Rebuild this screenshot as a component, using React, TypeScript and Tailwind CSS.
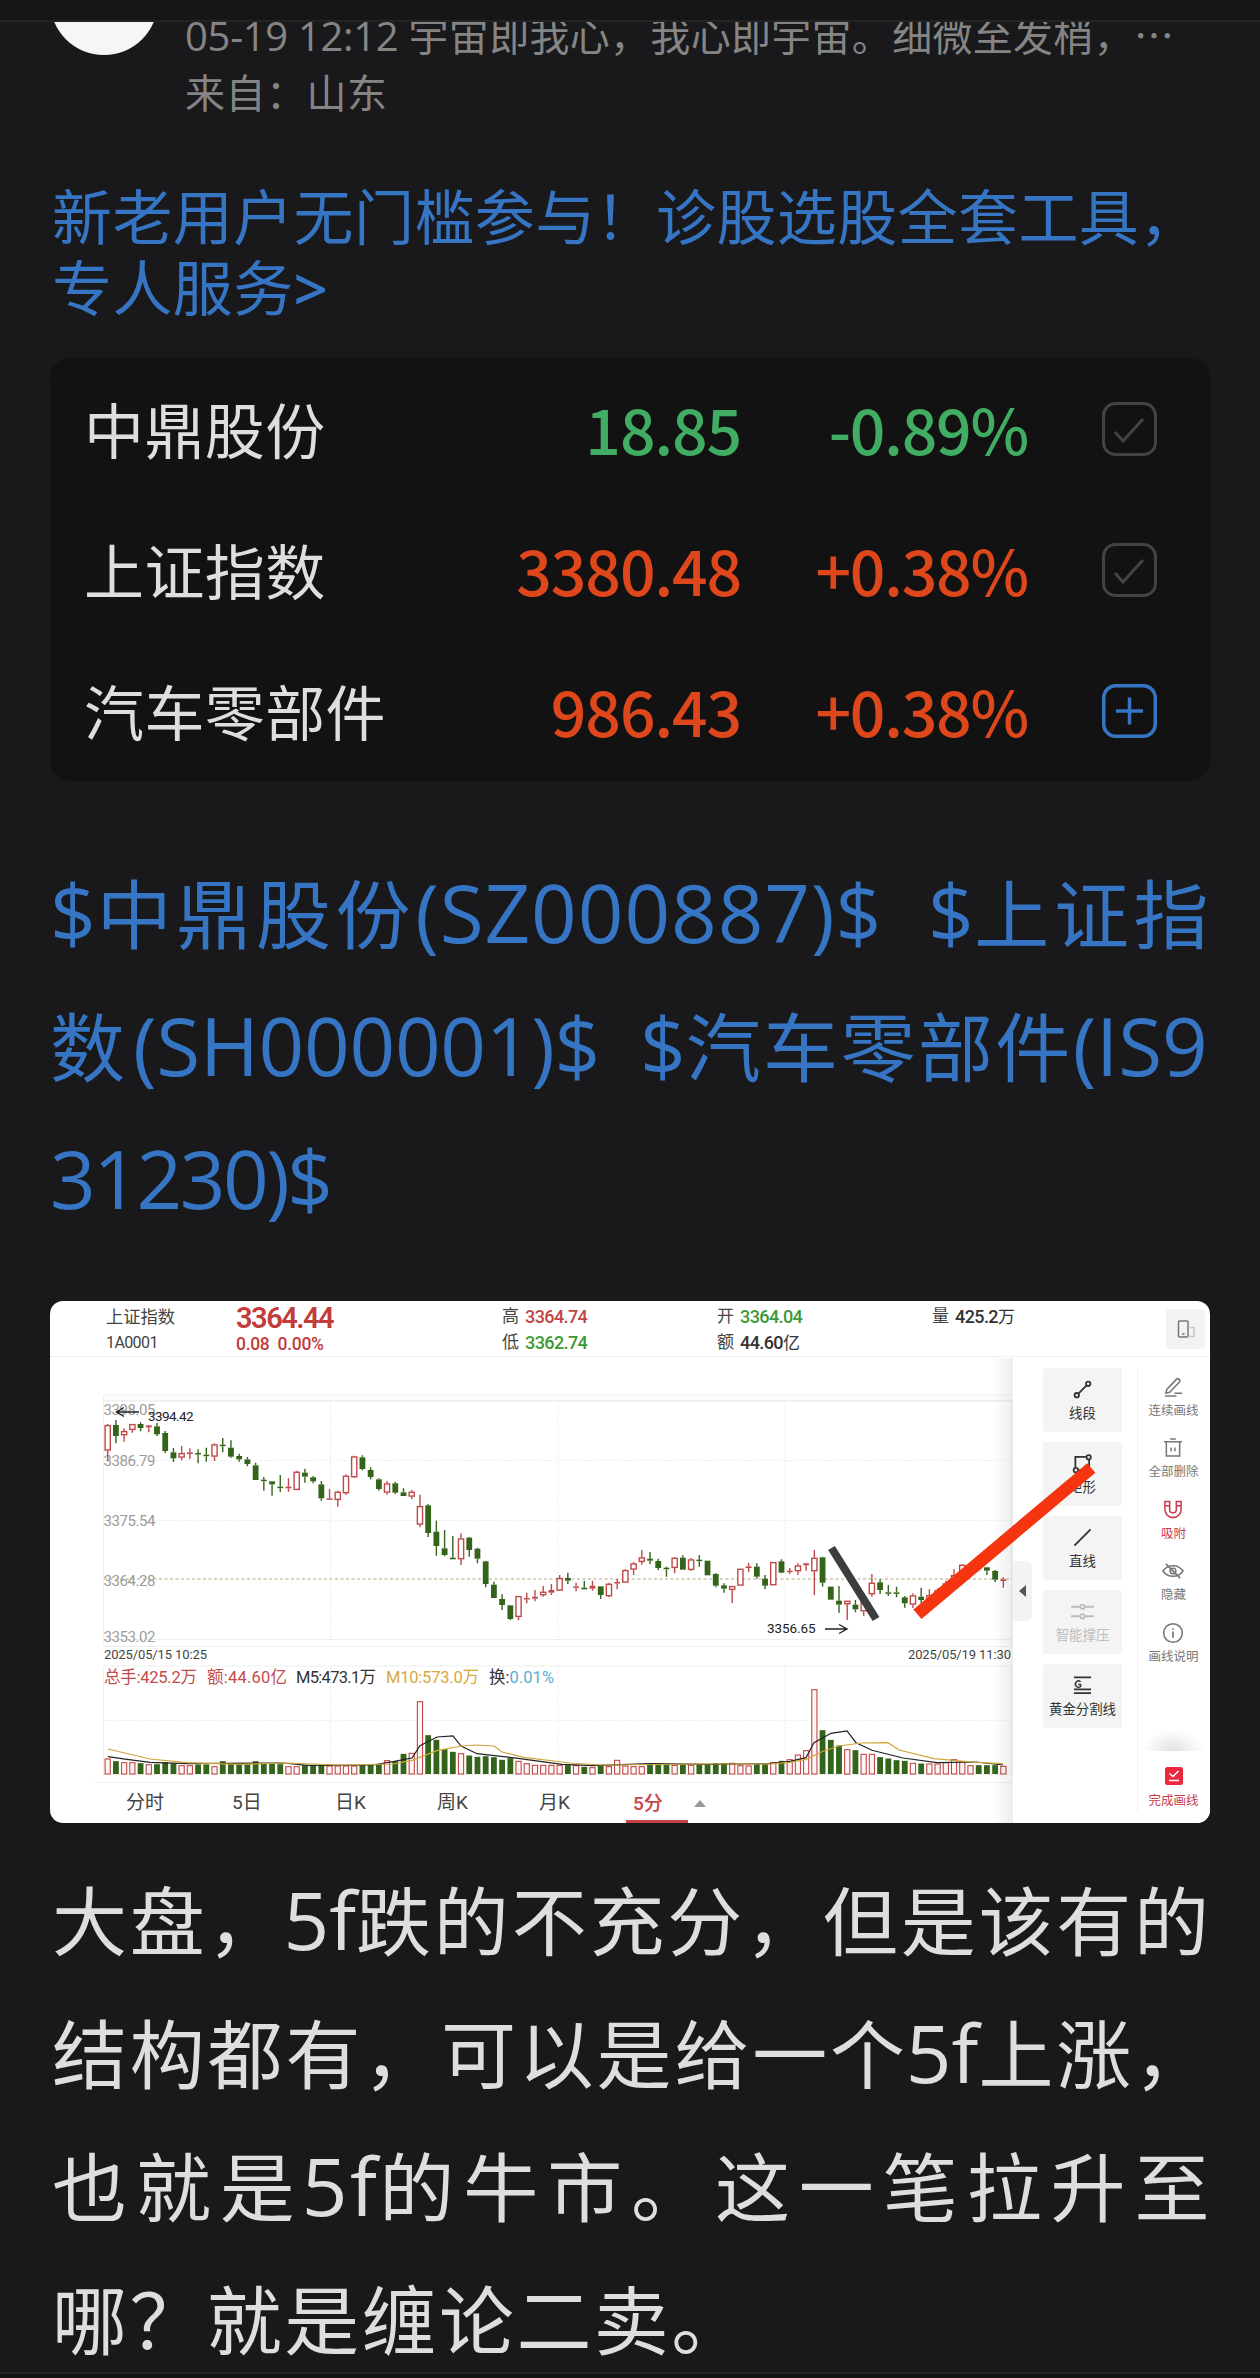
import React from 'react'

type Stock = { name: string, price: string, change: string, color: string, added: boolean }

const stocks: Stock[] = [
    { name: '中鼎股份', price: '18.85', change: '-0.89%', color: 'text-[#40ad62]', added: true },
    { name: '上证指数', price: '3380.48', change: '+0.38%', color: 'text-[#de461b]', added: true },
    { name: '汽车零部件', price: '986.43', change: '+0.38%', color: 'text-[#de461b]', added: false },
]

// [up, body top, body bottom, high, low, volume top], in thirds of a pixel
const candles: number[][] = [
    [1, 405, 482, 402, 513, 657], [0, 405, 438, 390, 460, 665], [1, 423, 436, 415, 455, 668], [1, 402, 420, 402, 428, 668],
    [0, 402, 414, 397, 424, 671], [1, 406, 412, 406, 427, 674], [0, 409, 433, 399, 438, 674], [0, 429, 483, 423, 489, 668],
    [0, 487, 505, 474, 516, 672], [1, 489, 503, 468, 511, 677], [1, 487, 492, 475, 507, 677], [0, 489, 492, 478, 520, 675],
    [0, 494, 496, 473, 515, 675], [1, 463, 500, 460, 513, 680], [0, 464, 467, 444, 487, 665], [0, 473, 500, 451, 504, 672],
    [0, 498, 508, 491, 515, 674], [0, 508, 522, 501, 529, 674], [0, 526, 570, 518, 570, 665], [0, 569, 572, 561, 602, 672],
    [0, 574, 583, 574, 617, 672], [0, 590, 594, 555, 606, 674], [1, 590, 595, 565, 605, 680], [1, 545, 600, 542, 600, 680],
    [0, 548, 560, 536, 578, 677], [0, 562, 574, 558, 580, 677], [0, 583, 625, 573, 632, 677], [1, 625, 628, 597, 630, 678],
    [1, 605, 630, 602, 650, 678], [1, 557, 610, 553, 615, 678], [1, 499, 562, 497, 563, 678], [0, 502, 537, 496, 541, 677],
    [0, 540, 561, 532, 568, 677], [0, 568, 597, 565, 602, 675], [1, 580, 608, 573, 614, 662], [0, 580, 608, 575, 612, 665],
    [0, 607, 618, 595, 618, 643], [1, 605, 620, 600, 627, 640], [1, 648, 704, 614, 712, 485], [0, 646, 729, 642, 741, 587],
    [0, 725, 768, 692, 797, 601], [0, 775, 795, 720, 798, 629], [0, 803, 808, 738, 808, 637], [1, 745, 808, 730, 825, 641],
    [0, 743, 780, 741, 800, 648], [0, 776, 806, 773, 820, 652], [0, 814, 882, 812, 892, 650], [0, 884, 924, 875, 924, 653],
    [0, 927, 945, 913, 960, 661], [0, 946, 987, 946, 990, 656], [1, 918, 981, 918, 991, 664], [1, 924, 927, 908, 940, 671],
    [1, 920, 926, 900, 934, 676], [1, 905, 916, 888, 920, 676], [1, 900, 908, 882, 915, 676], [1, 864, 902, 855, 902, 676],
    [0, 864, 872, 848, 882, 677], [1, 889, 892, 878, 904, 677], [0, 893, 898, 873, 898, 682], [1, 887, 896, 872, 902, 683],
    [0, 889, 915, 889, 927, 677], [1, 881, 919, 878, 922, 680], [1, 876, 879, 867, 898, 661], [1, 840, 878, 838, 878, 678],
    [1, 820, 839, 816, 855, 680], [1, 802, 816, 780, 824, 680], [0, 806, 812, 786, 822, 674], [0, 813, 834, 806, 840, 674],
    [0, 833, 836, 830, 860, 674], [1, 803, 834, 802, 850, 676], [0, 803, 839, 796, 839, 674], [1, 808, 840, 804, 842, 676],
    [0, 809, 812, 796, 830, 674], [0, 812, 856, 812, 856, 674], [0, 852, 887, 850, 892, 671], [0, 886, 896, 880, 908, 671],
    [1, 888, 900, 888, 940, 670], [1, 836, 887, 836, 887, 677], [1, 829, 834, 818, 846, 678], [0, 830, 860, 820, 866, 674],
    [0, 866, 887, 855, 898, 674], [1, 816, 886, 816, 886, 668], [0, 814, 848, 808, 850, 664], [1, 842, 846, 834, 852, 659],
    [1, 826, 844, 820, 855, 645], [1, 820, 826, 818, 842, 632], [1, 803, 844, 780, 915, 449], [0, 802, 878, 800, 890, 572],
    [0, 890, 929, 890, 929, 601], [0, 932, 944, 888, 968, 618], [1, 932, 943, 932, 990, 629], [0, 944, 958, 930, 967, 632],
    [1, 936, 964, 930, 977, 643], [1, 878, 913, 852, 920, 643], [0, 877, 900, 868, 912, 653], [0, 907, 910, 885, 918, 657],
    [0, 907, 910, 890, 922, 662], [0, 922, 940, 918, 953, 664], [1, 916, 944, 910, 954, 670], [0, 920, 930, 893, 940, 672],
    [1, 915, 930, 898, 940, 672], [1, 900, 915, 895, 925, 672], [1, 880, 900, 872, 905, 668], [1, 855, 875, 838, 880, 659],
    [1, 824, 850, 822, 860, 665], [1, 826, 835, 822, 845, 677], [0, 828, 836, 824, 842, 677], [0, 832, 842, 830, 855, 677],
    [0, 843, 869, 840, 876, 677], [1, 868, 873, 862, 893, 679],
]

const ma5 = '58,455.7 77,458.3 100,461.3 137,462.7 233,462 257,464.3 323,464 343,460.7 362,457 370,444.7 387,436 403,434.8 411,445 427,452.7 468,457.3 512,463.3 543,464.7 600,462.7 658,463.3 719,462.7 740,460.3 756,456.7 764,441.7 781,432.3 797,430 806,441.7 822,449.3 853,457 887,461.7 926,461 953,464'
const ma10 = '58,448 100,458 137,461.7 190,463.3 237,462 290,464 343,463 362,459.3 387,449.7 411,445 427,444 444,445 452,451 474,456.3 520,462 551,464 658,463 719,463 740,461.3 756,458.3 773,450.3 789,445 811,442 838,441.7 849,449 884,457.7 926,461.3 953,462.7'

const prices = [
    { label: '3398.05', y: 114 },
    { label: '3386.79', y: 165 },
    { label: '3375.54', y: 225 },
    { label: '3364.28', y: 285 },
    { label: '3353.02', y: 341 },
]

function CheckBox() {
    return (
        <svg width="55" height="54" viewBox="0 0 55 54" fill="none" stroke="#434343" strokeWidth="3">
            <rect x="1.5" y="1.5" width="52" height="51" rx="12" />
            <path d="M13 30l8 9 20-22" />
        </svg>
    )
}

function AddBox() {
    return (
        <svg width="55" height="54" viewBox="0 0 55 54" fill="none" stroke="#3575c3" strokeWidth="3.5">
            <rect x="1.75" y="1.75" width="51.5" height="50.5" rx="12" />
            <path d="M14 27h27M27.500 13.500v27" />
        </svg>
    )
}

function Chart() {
    return (
        <svg className="block" width="963" height="426" viewBox="0 56 963 426" fontFamily="Roboto, 'Noto Sans CJK SC', sans-serif">
            <g stroke="#efefef" fill="none">
                <path d="M54 94H962M54 345.500H962M54 365H962M54 338.500H962M54 473.500H962M45 481.500H963" />
                <path d="M54 99.700H962" strokeWidth="2" />
                <path d="M53.500 94V345M961.500 99V345M53.500 365V474M961.500 365V474" />
                <path d="M54 159.500H962M54 219.500H962M54 419.500H962M280.500 100V338M508 100V338M735 100V338M280.500 365V474M508 365V474M735 365V474" strokeDasharray="3 2" />
            </g>
            <path d="M54 278H962" stroke="#cbc8a6" strokeWidth="1.300" strokeDasharray="3 2.500" />
            <g fontSize="15" fill="#9b9b9b">
                {prices.map(p => (
                    <text key={p.label} x="53.500" y={p.y} textLength="52">{p.label}</text>
                ))}
            </g>
            {candles.map(([up, top, bottom, high, low, vol], i) => {
                const x = 57.7 + i * 8.217
                const color = up ? '#c04848' : '#33641a'
                const y = top / 3 - 11
                const h = Math.max((bottom - top) / 3, 1.5)
                const hollow = up && h > 3
                const volY = vol / 3 + 239
                return (
                    <g key={i} stroke={color} strokeWidth="1.4">
                        <path d={`M${x} ${high / 3 - 11}V${y}M${x} ${y + h}V${low / 3 - 11}`} />
                        {hollow
                            ? <rect x={x - 2.6} y={y + 0.6} width="5.2" height={h - 1.2} fill="#fff" />
                            : <rect x={x - 2.9} y={y} width="5.8" height={h} fill={color} stroke="none" />}
                        {up
                            ? <rect x={x - 2.6} y={volY} width="5.2" height={473 - volY} fill="#fff5f5" strokeWidth="1.1" />
                            : <rect x={x - 2.9} y={volY - 0.5} width="5.8" height={473.5 - volY} fill={color} stroke="none" />}
                    </g>
                )
            })}
            <polyline points={ma5} fill="none" stroke="#222" strokeWidth="1.2" />
            <polyline points={ma10} fill="none" stroke="#d0a53c" strokeWidth="1.2" />
            <g stroke="#222" strokeWidth="1.4" fill="none">
                <path d="M89 111H67M74 106.500L66.500 111L74 115.500" />
                <path d="M775 328H796M789 323.500L797 328L789 332.500" />
            </g>
            <g fontSize="13.500" fill="#222">
                <text x="98" y="119.500" textLength="45.500">3394.42</text>
                <text x="717" y="331.500" textLength="48.500">3356.65</text>
            </g>
            <g fontSize="13" fill="#444">
                <text x="54" y="357.500" textLength="103">2025/05/15 10:25</text>
                <text x="858" y="357.500" textLength="103">2025/05/19 11:30</text>
            </g>
            <g fontSize="16.500">
                <text x="54" y="381.500" textLength="93" fill="#c24b4b">总手:425.2万</text>
                <text x="157" y="381.500" textLength="80" fill="#c24b4b">额:44.60亿</text>
                <text x="246" y="381.500" textLength="80" fill="#333">M5:473.1万</text>
                <text x="336" y="381.500" textLength="93" fill="#d6a83e">M10:573.0万</text>
                <text x="439" y="381.500" textLength="65" fill="#333">换:<tspan fill="#59aed3">0.01%</tspan></text>
            </g>
        </svg>
    )
}

function Quote({ label, value, color, unit }: { label: string, value: string, color: string, unit?: string }) {
    return (
        <div className="flex h-[26px] items-center gap-[6px] text-[17px] text-[#444]">
            <span>{label}</span>
            <span className={color}><b className="text-[18px] font-medium tracking-[-0.6px]">{value}</b>{unit}</span>
        </div>
    )
}

const tools = [
    { label: '线段', icon: <><path d="M5.500 14.500L14.500 5.500" /><circle cx="4" cy="16" r="2.300" /><circle cx="16" cy="4" r="2.300" /></> },
    { label: '矩形', icon: <><path d="M2.500 14V3H13.500M17 6V17H6" /><circle cx="3" cy="17" r="2.300" /><circle cx="16.500" cy="3.500" r="2.300" /></> },
    { label: '直线', icon: <path d="M1.500 18.500L18.500 1.500" /> },
    { label: '智能撑压', disabled: true, icon: <><path d="M-2 5H7.500M12.500 5H22M-2 15H7.500M12.500 15H22" /><circle cx="10" cy="5" r="2.300" /><circle cx="10" cy="15" r="2.300" /></> },
    { label: '黄金分割线', icon: <><path d="M1 1.500H19M1 14H19M1 18H19" /><path d="M8 6A3.300 3.300 0 1 0 8 11V9H5.500" strokeWidth="1.500" /></> },
]

const actions = [
    { label: '连续画线', icon: <><path d="M4 13L3 17L7 16L17 5.500A1.500 1.500 0 0 0 14 2.500Z" /><path d="M12 17H20M2 20H14" /></> },
    { label: '全部删除', icon: <><path d="M1 4H20M7.500 1H13.500M3.500 4V19H17.500V4M8.500 10V14M12.500 10V14" /></> },
    { label: '吸附', red: true, icon: <><path d="M2 1.500H7V10A3.500 3.500 0 0 0 14 10V1.500H19V10A8.500 8.500 0 0 1 2 10ZM2 6H7M14 6H19" /></> },
    { label: '隐藏', icon: <><path d="M0 10.500C5 3 16 3 21 10.500C16 18 5 18 0 10.500ZM3 3L18 18" /><circle cx="10.500" cy="10.500" r="3" /></> },
    { label: '画线说明', icon: <><circle cx="10.500" cy="10.500" r="9.800" /><path d="M10.500 9V15.500M10.500 5.500V7" strokeWidth="1.800" /></> },
]

function DrawPanel() {
    return (
        <div className="flex h-[466px] w-[197px] bg-white">
            <div className="mt-[204px] flex h-[60px] w-[19px] items-center justify-center rounded-r-[6px] bg-[#f3f3f3]">
                <svg width="7" height="12" viewBox="0 0 7 12"><path d="M7 0V12L0 6Z" fill="#555" /></svg>
            </div>
            <div className="ml-[11px] mt-[11px] flex w-[79px] flex-col gap-[10px]">
                {tools.map(t => (
                    <div key={t.label} className={`flex h-[64px] flex-col items-center rounded-[3px] bg-[#f4f4f4] pt-[12px] ${t.disabled ? 'text-[#bdbdbd]' : 'text-[#333]'}`}>
                        <svg className="overflow-visible" width="19" height="19" viewBox="0 0 20 20" fill="none" stroke="currentColor" strokeWidth="1.900">{t.icon}</svg>
                        <span className="mt-[5px] whitespace-nowrap text-[13.4px] leading-[20px]">{t.label}</span>
                    </div>
                ))}
            </div>
            <div className="ml-[15px] mt-[11px] h-[444px] w-px bg-[#f0f0f0]"></div>
            <div className="flex w-[71px] flex-col items-center pt-[20px]">
                {actions.map(a => (
                    <div key={a.label} className={`flex h-[61.4px] flex-col items-center ${a.red ? 'text-[#c83a4c]' : 'text-[#777]'}`}>
                        <svg className="overflow-visible" width="20" height="20" viewBox="0 0 21 21" fill="none" stroke="currentColor" strokeWidth="1.600">{a.icon}</svg>
                        <span className="mt-[4px] whitespace-nowrap text-[12.5px] leading-[20px]">{a.label}</span>
                    </div>
                ))}
                <div className="mt-[45px] h-[22px] w-[63px] bg-[radial-gradient(ellipse_at_bottom,#e2e2e2_0%,#fff_70%)]"></div>
                <svg className="mt-[16px]" width="18" height="18" viewBox="0 0 18 18" fill="none" stroke="#fff" strokeWidth="1.600">
                    <rect width="18" height="18" rx="2.500" fill="#ea2a3c" stroke="none" />
                    <path d="M4.500 6.500L8 9.500L13.500 4M4 13.500H14" />
                </svg>
                <span className="mt-[6px] text-[12.5px] leading-[20px] text-[#c83a4c]">完成画线</span>
            </div>
        </div>
    )
}

function StockImage() {
    return (
        <div className="relative mx-[50px] h-[522px] overflow-hidden rounded-[13px] bg-white font-[Roboto,'Noto_Sans_CJK_SC',sans-serif]">
            <div className="flex h-[56px] border-b border-[#efefef] pl-[56px] text-[#444]">
                <div className="w-[130px]">
                    <div className="mt-[3px] h-[26px] text-[17.3px] leading-[26px]">上证指数</div>
                    <div className="h-[25px] text-[16px] leading-[25px] tracking-[-0.6px]">1A0001</div>
                </div>
                <div className="w-[266px] text-[#c23c3c]">
                    <div className="mt-[3px] h-[28px] text-[29px] font-semibold leading-[28px] tracking-[-1.5px]">3364.44</div>
                    <div className="h-[24px] whitespace-pre text-[17.5px] font-medium leading-[24px] tracking-[-0.3px]">0.08  0.00%</div>
                </div>
                <div className="w-[215px] pt-[3px]">
                    <Quote label="高" value="3364.74" color="text-[#c24545]" />
                    <Quote label="低" value="3362.74" color="text-[#3c9a35]" />
                </div>
                <div className="w-[215px] pt-[3px]">
                    <Quote label="开" value="3364.04" color="text-[#3c9a35]" />
                    <Quote label="额" value="44.60" unit="亿" color="text-[#333]" />
                </div>
                <div className="w-[234px] pt-[3px]">
                    <Quote label="量" value="425.2" unit="万" color="text-[#333]" />
                </div>
                <div className="mt-[8px] flex h-[40px] w-[39px] items-center justify-center rounded-[3px] bg-[#f3f3f3]">
                    <svg width="18" height="18" viewBox="0 0 18 18" fill="none" stroke="#777" strokeWidth="1.500">
                        <rect x="1.500" y="1" width="9.500" height="16" rx="1" />
                        <path d="M5 14H7.500" />
                        <path d="M12.500 7.500H17V16.500H12.500" stroke="#c9c9c9" />
                    </svg>
                </div>
            </div>
            <div className="flex">
                <div className="w-[963px]">
                    <Chart />
                    <div className="flex h-[40px] items-center text-[19px] leading-[42px] text-[#444]">
                        <span className="ml-[76px] w-[106px]">分时</span>
                        <span className="w-[103px]">5日</span>
                        <span className="w-[102px]">日K</span>
                        <span className="w-[102px]">周K</span>
                        <span className="w-[87px]">月K</span>
                        <span className="h-[40px] w-[62px] border-b-[3px] border-[#c84444] pl-[7px] font-medium text-[#c84444]">5分</span>
                        <svg className="ml-[6px]" width="12" height="7" viewBox="0 0 12 7"><path d="M0 7L6 0L12 7Z" fill="#999" /></svg>
                    </div>
                </div>
                <DrawPanel />
            </div>
            <div className="absolute left-[943px] top-[57px] h-[465px] w-[20px] bg-gradient-to-r from-transparent to-black/7"></div>
            <svg className="absolute left-0 top-0" width="1160" height="522" viewBox="0 0 1160 522">
                <path d="M781.500 247L826 318" stroke="#3d3d3d" strokeWidth="8" />
                <path d="M867.400 313.300L1041.300 167" stroke="#f53510" strokeWidth="12.600" />
            </svg>
        </div>
    )
}

function App() {
    return (
        <div className="h-[2378px] w-[1260px] overflow-hidden bg-[#19191b] font-['Open_Sans','Noto_Sans_CJK_SC',sans-serif]">
            <div className="h-[22px] border-b-2 border-[#232324] bg-[#161616]"></div>
            <div className="flex h-[138px] overflow-hidden pl-[50px] text-[40px] text-[#858585]">
                <div className="-mt-[75px] h-[108px] w-[108px] rounded-full bg-[#f6f6f6]"></div>
                <div className="-mt-[17px] ml-[27px] whitespace-nowrap leading-[58px]">
                    <div className="h-[59px] tracking-[0.3px]"><span className="tracking-[-0.3px]">05-19 12:12 </span>宇宙即我心，我心即宇宙。细微至发梢，<span className="font-['Noto_Sans_CJK_SC']">…</span></div>
                    <div className="h-[58px] tracking-[0.5px]">来自：山东</div>
                </div>
            </div>

            <div className="h-[198px] pl-[52px] pt-[22px] text-[60px] leading-[71px] tracking-[0.4px] text-[#3575c3]">
                <p>新老用户无门槛参与！诊股选股全套工具，</p>
                <p>专人服务<span className="font-semibold">&gt;</span></p>
            </div>

            <div className="mx-[50px] rounded-[20px] bg-[#121212]">
                {stocks.map(s => (
                    <div key={s.name} className="flex h-[141px] items-center whitespace-nowrap font-['Noto_Sans_CJK_SC',sans-serif] text-[62.5px]">
                        <span className="w-[380px] pb-[2px] pl-[34px] text-[60px] tracking-[0.4px] text-[#dedede]">{s.name}</span>
                        <span className={`w-[311px] pb-[2px] text-right font-medium tracking-[-1.1px] ${s.color}`}>{s.price}</span>
                        <span className={`w-[287px] pb-[2px] text-right font-medium tracking-[-1.2px] ${s.color}`}>{s.change}</span>
                        <button className="ml-[74px]">{s.added ? <CheckBox /> : <AddBox />}</button>
                    </div>
                ))}
            </div>

            <div className="h-[520px] whitespace-nowrap pl-[50px] pt-[67px] text-[75px] leading-[133px] text-[#3575c3]">
                <p className="h-[133px] tracking-[4.6px]">
                    <span className="text-[80px] leading-none tracking-[1px]">$</span>中鼎股份<span className="text-[80px] leading-none tracking-[0.9px]">(SZ000887)$</span>
                    <span className="ml-[46px] text-[80px] leading-none tracking-[0.5px]">$</span>上证指
                </p>
                <p className="h-[133px] tracking-[2.4px]">
                    <span className="tracking-[8px]">数</span><span className="text-[80px] leading-none tracking-[-0.3px]">(SH000001)$</span>
                    <span className="ml-[40px] text-[80px] leading-none tracking-[0px]">$</span>汽车零部件<span className="text-[80px] leading-none tracking-[-0.2px]">(IS9</span>
                </p>
                <p className="h-[133px]"><span className="text-[80px] leading-none tracking-[-2.500px]">31230)$</span></p>
            </div>

            <StockImage />

            <div className="h-[549px] whitespace-nowrap pl-[52px] pt-[32px] text-[75px] leading-[133px] tracking-[2.800px] text-[#dedede]">
                <p className="h-[133px]">大盘，<span className="-ml-[2px] text-[80px] leading-none tracking-[0px]">5f</span>跌的不充分，但是该有的</p>
                <p className="h-[133px]">结构都有，可以是给一个<span className="-ml-[2px] text-[80px] leading-none tracking-[0px]">5f</span>上涨，</p>
                <p className="h-[133px] tracking-[8.900px]">也就是<span className="-ml-[2px] text-[80px] leading-none tracking-[2.500px]">5f</span>的牛市。这一笔拉升至</p>
                <p className="h-[133px] tracking-[2.400px]">哪？就是缠论二卖。</p>
            </div>
            <div className="h-[6px] border-t-2 border-[#232324] bg-[#161616]"></div>
        </div>
    )
}

export default App
